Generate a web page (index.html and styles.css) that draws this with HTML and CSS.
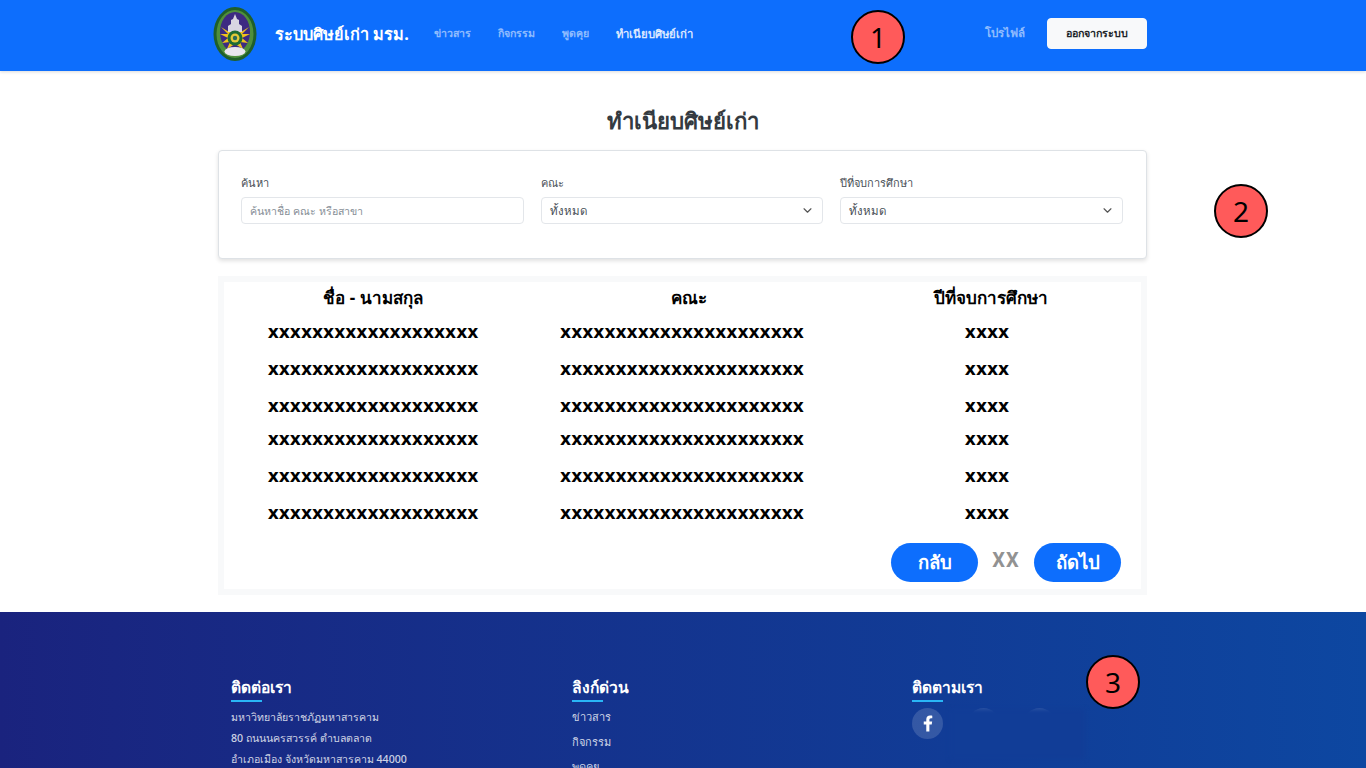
FILE: index.html
```html
<!DOCTYPE html>
<html lang="th">
<head>
  <meta charset="UTF-8">
  <title>ทำเนียบศิษย์เก่า</title>
  <link rel="stylesheet" href="styles.css">
</head>
<body>
  <header class="topbar">
    <div class="topbar-inner">
      <svg class="logo" viewBox="0 0 44 54" width="44" height="54">
        <ellipse cx="22" cy="27" rx="21.5" ry="27" fill="#1f5f2a"/>
        <ellipse cx="22" cy="27" rx="18.5" ry="24" fill="#4f8f3c"/>
        <ellipse cx="22" cy="25" rx="15" ry="20" fill="#3d2a82"/>
        <path d="M8 20 L15 27 L7 27 L15 31 L9 36 L17 35 L14 42 L22 37 L30 42 L27 35 L35 36 L29 31 L37 27 L29 27 L36 20 L28 25 L22 23 L16 25 Z" fill="#eec21c"/>
        <path d="M22 7 L24 12 L26 13 L26 17 L29 19 L29 25 L15 25 L15 19 L18 17 L18 13 L20 12 Z" fill="#d9d5e2"/>
        <circle cx="22" cy="31" r="7.5" fill="#1d6b34"/>
        <circle cx="22" cy="31" r="4.5" fill="#e3c93a"/>
        <circle cx="22" cy="31" r="2.2" fill="#2a6a5a"/>
        <ellipse cx="22" cy="44.5" rx="10.5" ry="4.5" fill="#e9e6ee"/>
      </svg>
      <a class="brand" href="#">ระบบศิษย์เก่า มรม.</a>
      <nav class="mainnav">
        <a href="#">ข่าวสาร</a>
        <a href="#">กิจกรรม</a>
        <a href="#">พูดคุย</a>
        <a class="active" href="#">ทำเนียบศิษย์เก่า</a>
      </nav>
      <div class="topbar-right">
        <a class="profile" href="#">โปรไฟล์</a>
        <button class="logout" type="button">ออกจากระบบ</button>
      </div>
    </div>
  </header>

  <main class="content">
    <h1 class="page-title">ทำเนียบศิษย์เก่า</h1>

    <section class="filter-card">
      <div class="field">
        <label for="search">ค้นหา</label>
        <input id="search" type="text" placeholder="ค้นหาชื่อ คณะ หรือสาขา">
      </div>
      <div class="field">
        <label>คณะ</label>
        <div class="select-box">ทั้งหมด
          <svg viewBox="0 0 16 16" width="11" height="11"><path d="M3 5.5l5 5 5-5" fill="none" stroke="#555" stroke-width="1.7" stroke-linecap="round" stroke-linejoin="round"/></svg>
        </div>
      </div>
      <div class="field">
        <label>ปีที่จบการศึกษา</label>
        <div class="select-box">ทั้งหมด
          <svg viewBox="0 0 16 16" width="11" height="11"><path d="M3 5.5l5 5 5-5" fill="none" stroke="#555" stroke-width="1.7" stroke-linecap="round" stroke-linejoin="round"/></svg>
        </div>
      </div>
    </section>

    <section class="table-wrap">
      <div class="table-inner">
        <div class="row head"><div>ชื่อ - นามสกุล</div><div>คณะ</div><div>ปีที่จบการศึกษา</div></div>
        <div class="row"><div>xxxxxxxxxxxxxxxxxxx</div><div>xxxxxxxxxxxxxxxxxxxxxx</div><div>xxxx</div></div>
        <div class="row"><div>xxxxxxxxxxxxxxxxxxx</div><div>xxxxxxxxxxxxxxxxxxxxxx</div><div>xxxx</div></div>
        <div class="row"><div>xxxxxxxxxxxxxxxxxxx</div><div>xxxxxxxxxxxxxxxxxxxxxx</div><div>xxxx</div></div>
        <div class="row short"><div>xxxxxxxxxxxxxxxxxxx</div><div>xxxxxxxxxxxxxxxxxxxxxx</div><div>xxxx</div></div>
        <div class="row"><div>xxxxxxxxxxxxxxxxxxx</div><div>xxxxxxxxxxxxxxxxxxxxxx</div><div>xxxx</div></div>
        <div class="row"><div>xxxxxxxxxxxxxxxxxxx</div><div>xxxxxxxxxxxxxxxxxxxxxx</div><div>xxxx</div></div>
        <div class="pager">
          <button type="button">กลับ</button>
          <span class="page-no">XX</span>
          <button type="button">ถัดไป</button>
        </div>
      </div>
    </section>
  </main>

  <footer class="footer">
    <div class="footer-inner">
      <div class="footer-col">
        <h3>ติดต่อเรา</h3>
        <p>มหาวิทยาลัยราชภัฏมหาสารคาม</p>
        <p>80 ถนนนครสวรรค์ ตำบลตลาด</p>
        <p>อำเภอเมือง จังหวัดมหาสารคาม 44000</p>
      </div>
      <div class="footer-col">
        <h3>ลิงก์ด่วน</h3>
        <a href="#">ข่าวสาร</a>
        <a href="#">กิจกรรม</a>
        <a href="#">พูดคุย</a>
      </div>
      <div class="footer-col">
        <h3>ติดตามเรา</h3>
        <div class="socials">
          <a class="social" href="#">
            <svg viewBox="0 0 320 512" width="10" height="17"><path d="M279 288l14-93h-89v-60c0-25 12-50 52-50h41V7s-37-7-72-7C152 0 105 44 105 124v71H24v93h81v224h99V288z" fill="#fff"/></svg>
          </a>
          <a class="social" href="#"></a>
          <a class="social" href="#"></a>
          <div class="social-cover"></div>
        </div>
      </div>
    </div>
  </footer>

  <div class="marker m1">1</div>
  <div class="marker m2">2</div>
  <div class="marker m3">3</div>
</body>
</html>
```

FILE: styles.css
```css
html, body {
  margin: 0;
  height: 768px;
  overflow: hidden;
}
body {
  font-family: "Noto Sans", "Liberation Sans", sans-serif;
  background: #fff;
  color: #212529;
  position: relative;
}
a {
  text-decoration: none;
}
.topbar {
  height: 71px;
  background: #0d6efd;
  box-shadow: 0 1px 3px rgba(0,0,0,0.15);
}
.topbar-inner {
  width: 934px;
  margin-left: 213px;
  height: 68px;
  display: flex;
  align-items: center;
}
.logo {
  flex: none;
  filter: blur(0.4px);
}
.brand {
  margin-left: 18px;
  color: #fff;
  font-size: 16.25px;
  font-weight: 700;
}
.mainnav {
  display: flex;
  gap: 27px;
  margin-left: 25px;
  font-size: 10.6px;
  font-weight: 600;
}
.mainnav a {
  color: rgba(255,255,255,0.55);
}
.mainnav a.active {
  color: rgba(255,255,255,0.85);
  font-size: 11.3px;
}
.topbar-right {
  margin-left: auto;
  margin-bottom: 2px;
  display: flex;
  align-items: center;
  gap: 22px;
}
.profile {
  color: rgba(255,255,255,0.55);
  font-size: 11.5px;
  font-weight: 600;
}
.logout {
  width: 100px;
  height: 31px;
  background: #f8f9fa;
  border: 1px solid #f8f9fa;
  border-radius: 4px;
  font: 600 10.7px "Noto Sans", "Liberation Sans", sans-serif;
  color: #212529;
  padding: 0;
}
.content {
  width: 929px;
  margin-left: 218px;
}
.page-title {
  margin: 35px 0 14px;
  text-align: center;
  font-size: 22.2px;
  line-height: 30px;
  font-weight: 600;
  color: #343a40;
}
.filter-card {
  box-sizing: border-box;
  height: 109px;
  padding: 24px 23px 0 22px;
  display: grid;
  grid-template-columns: repeat(3, 1fr);
  column-gap: 17px;
  border: 1px solid #dee2e6;
  border-radius: 4px;
  box-shadow: 0 2px 4px rgba(0,0,0,0.12);
  background: #fff;
}
.field label {
  display: block;
  height: 22px;
  font-size: 11px;
  line-height: 16px;
  color: #495057;
}
.field input, .select-box {
  box-sizing: border-box;
  width: 100%;
  height: 27px;
  border: 1px solid #e3e6ea;
  border-radius: 4px;
  padding: 0 9px 0 8px;
  font: 11.5px "Noto Sans", "Liberation Sans", sans-serif;
  color: #495057;
  background: #fff;
}
.field input {
  font-size: 10.6px;
}
.field input::placeholder {
  color: #868e96;
}
.select-box {
  display: flex;
  align-items: center;
  justify-content: space-between;
}
.table-wrap {
  margin-top: 17px;
  padding: 6px;
  background: #f8f9fa;
}
.table-inner {
  background: #fff;
  height: 307px;
}
.row {
  display: grid;
  grid-template-columns: 298px 320px 290px;
  height: 37px;
  align-items: center;
  text-align: center;
  color: #000;
  font-family: "DejaVu Sans", sans-serif;
  font-weight: 700;
  font-size: 17.2px;
}
.row.short {
  margin-top: -4px;
}
.row.head {
  grid-template-columns: 298px 334px 270px;
  height: 31px;
  font-family: "Noto Sans", sans-serif;
  font-size: 17px;
}
.pager {
  display: flex;
  justify-content: flex-end;
  align-items: center;
  padding: 12px 20px 0 0;
}
.pager button {
  width: 87px;
  height: 39px;
  border: none;
  border-radius: 20px;
  background: #0d6efd;
  color: #fff;
  font: 700 18.5px "Noto Sans", sans-serif;
  padding: 0;
}
.page-no {
  width: 56px;
  margin-bottom: 5px;
  text-align: center;
  color: #929292;
  font-family: Roboto, sans-serif;
  font-size: 20px;
  font-weight: 700;
  letter-spacing: 1px;
}
.footer {
  margin-top: 17px;
  height: 156px;
  background: linear-gradient(90deg, #1a237e, #0d47a1);
  overflow: hidden;
}
.footer-inner {
  margin-left: 231px;
  padding-top: 65px;
  display: grid;
  grid-template-columns: 341px 340px 341px;
  color: rgba(255,255,255,0.8);
  font-size: 10.6px;
}
.footer-col h3 {
  margin: 0 0 7px;
  padding-bottom: 5px;
  width: max-content;
  color: #fff;
  font-size: 15.6px;
  line-height: 20px;
  font-weight: 600;
  position: relative;
}
.footer-col h3::after {
  content: "";
  position: absolute;
  left: 0;
  bottom: 0;
  width: 31px;
  height: 2px;
  background: #29b6f6;
}
.footer-col p {
  margin: 0 0 5px;
  line-height: 16px;
  font-weight: 500;
}
.footer-col a {
  display: block;
  color: rgba(255,255,255,0.8);
  font-size: 11px;
  font-weight: 500;
  line-height: 16px;
  margin-bottom: 9px;
}
.socials {
  display: flex;
  gap: 25px;
  margin-top: -1px;
  position: relative;
}
.footer-col a.social {
  width: 31px;
  height: 31px;
  border-radius: 50%;
  background: rgba(255,255,255,0.15);
  display: flex;
  align-items: center;
  justify-content: center;
  margin: 0;
}
/* covers the two blanked icons, only their top edge shows */
.social-cover {
  position: absolute;
  left: 38px;
  top: 1px;
  width: 135px;
  height: 50px;
  background: #113d97;
  filter: blur(2px);
}
.marker {
  position: absolute;
  width: 50px;
  height: 50px;
  border: 2px solid #000;
  border-radius: 50%;
  background: #ff5a5a;
  color: #000;
  font-size: 28px;
  line-height: 50px;
  text-align: center;
}
.m1 { left: 851px; top: 10px; }
.m2 { left: 1214px; top: 184px; }
.m3 { left: 1086px; top: 655px; }
```
